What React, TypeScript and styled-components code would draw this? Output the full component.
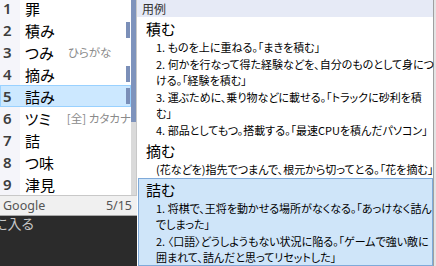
import styled, { createGlobalStyle } from 'styled-components'

const GlobalStyle = createGlobalStyle`
  html, body {
    margin: 0;
    padding: 0;
  }
  body {
    background: #2b2b2b;
    overflow: hidden;
    font-family: "Noto Sans CJK JP", "Noto Sans", sans-serif;
    font-feature-settings: "palt";
  }
`

interface ICandidate {
    n: number
    word: string
    note?: string
    mark?: boolean
    selected?: boolean
}

interface IEntry {
    head: string
    selected?: boolean
    senses: string[][]
}

const candidates: ICandidate[] = [
    { n: 1, word: '罪' },
    { n: 2, word: '積み', mark: true },
    { n: 3, word: 'つみ', note: 'ひらがな' },
    { n: 4, word: '摘み', mark: true },
    { n: 5, word: '詰み', mark: true, selected: true },
    { n: 6, word: 'ツミ', note: '[全] カタカナ' },
    { n: 7, word: '詰' },
    { n: 8, word: 'つ味' },
    { n: 9, word: '津見' },
]

const entries: IEntry[] = [
    {
        head: '積む',
        senses: [
            ['1. ものを上に重ねる。「まきを積む」'],
            ['2. 何かを行なって得た経験などを、自分のものとして身につ', 'ける。「経験を積む」'],
            ['3. 運ぶために、乗り物などに載せる。「トラックに砂利を積', 'む」'],
            ['4. 部品としてもつ。搭載する。「最速CPUを積んだパソコン」'],
        ],
    },
    {
        head: '摘む',
        senses: [['(花などを)指先でつまんで、根元から切ってとる。「花を摘む」']],
    },
    {
        head: '詰む',
        selected: true,
        senses: [
            ['1. 将棋で、王将を動かせる場所がなくなる。「あっけなく詰ん', 'でしまった」'],
            ['2. 〈口語〉どうしようもない状況に陥る。「ゲームで強い敵に', '囲まれて、詰んだと思ってリセットした」'],
        ],
    },
]

const Screen = styled.div`
    display: flex;
    width: 436px;
    height: 266px;
    overflow: hidden;
`

const LeftColumn = styled.div`
    width: 137px;
    flex-shrink: 0;
    display: flex;
    flex-direction: column;
`

const CandidateWindow = styled.div`
    margin-top: -3px;
    display: flex;
    flex-direction: column;
    background: #ffffff;
`

const ListArea = styled.div`
    display: flex;
`

const List = styled.div`
    width: 131px;
    display: flex;
    flex-direction: column;
`

const Row = styled.div<{ $selected?: boolean }>`
    height: 22px;
    display: flex;
    align-items: center;
    background: ${p => p.$selected ? '#cce8ff' : '#ffffff'};
    box-shadow: ${p => p.$selected ? 'inset 0 0 0 1px #99d1ff' : 'none'};
`

const Num = styled.div<{ $selected?: boolean }>`
    width: 20px;
    height: 100%;
    box-sizing: border-box;
    padding-left: 3px;
    display: flex;
    align-items: center;
    background: ${p => p.$selected ? 'transparent' : '#f5f5fa'};
    font-family: "Noto Sans", sans-serif;
    font-weight: 600;
    font-size: 15px;
    color: #3d3d3d;
`

const Word = styled.div`
    width: 43px;
    margin-left: 5px;
    font-size: 15px;
    color: #000000;
    white-space: nowrap;
`

const Note = styled.div`
    font-size: 11.5px;
    color: #8a8a8a;
    white-space: nowrap;
`

const Mark = styled.div`
    width: 4px;
    height: 16px;
    margin-left: auto;
    margin-right: 1px;
    background: #7b8fb8;
`

const Scrollbar = styled.div`
    width: 5px;
    border-right: 1px solid #c8c8c8;
    background: #dadada;
    display: flex;
    flex-direction: column;
`

const Thumb = styled.div`
    height: 125px;
    background: #7e93bc;
`

const Footer = styled.div`
    height: 19px;
    border-top: 1px solid #c8c8c8;
    border-bottom: 1px solid #a8a8a8;
    background: #f0f0f0;
    display: flex;
    align-items: center;
    justify-content: space-between;
    padding: 0 5px 0 3px;
    font-family: "Noto Sans", sans-serif;
    font-size: 12.5px;
    color: #555555;
`

const EditorText = styled.div`
    margin-left: -6px;
    line-height: 14px;
    font-size: 14px;
    color: #c6c6c6;
    white-space: nowrap;
`

const RightPanel = styled.div`
    width: 297px;
    flex-shrink: 0;
    box-sizing: border-box;
    border-right: 1px solid #a0a0a0;
    background: #ffffff;
    display: flex;
    flex-direction: column;
`

const Edge = styled.div`
    flex: 1;
    background: #e4e4e4;
`

const PanelHeader = styled.div`
    height: 17px;
    padding-left: 5px;
    display: flex;
    align-items: center;
    background: #e6eaf6;
    font-size: 12px;
    color: #333333;
`

const Entry = styled.div<{ $selected?: boolean }>`
    margin-left: 1px;
    padding: 1px 0 0 7px;
    border: 1px solid ${p => p.$selected ? '#7faad9' : 'transparent'};
    background: ${p => p.$selected ? '#cfe5f9' : 'transparent'};
`

const Head = styled.div`
    height: 20px;
    line-height: 20px;
    font-size: 15px;
    color: #000000;
`

const Sense = styled.div`
    padding-left: 10px;
    line-height: 16px;
    font-size: 11px;
    color: #000000;
    white-space: nowrap;

    & + & {
        margin-top: 1px;
    }
`

const Line = styled.div`
    height: 16px;
`

const App = () => {
    return (
        <>
            <GlobalStyle />
            <Screen>
                <LeftColumn>
                    <CandidateWindow>
                        <ListArea>
                            <List>
                                {candidates.map(c =>
                                    <Row key={c.n} $selected={c.selected}>
                                        <Num $selected={c.selected}>{c.n}</Num>
                                        <Word>{c.word}</Word>
                                        {c.note && <Note>{c.note}</Note>}
                                        {c.mark && <Mark />}
                                    </Row>
                                )}
                            </List>
                            <Scrollbar>
                                <Thumb />
                            </Scrollbar>
                        </ListArea>
                        <Footer>
                            <span>Google</span>
                            <span>5/15</span>
                        </Footer>
                    </CandidateWindow>
                    <EditorText>に入る</EditorText>
                </LeftColumn>
                <RightPanel>
                    <PanelHeader>用例</PanelHeader>
                    {entries.map(e =>
                        <Entry key={e.head} $selected={e.selected}>
                            <Head>{e.head}</Head>
                            {e.senses.map((s, i) =>
                                <Sense key={i}>
                                    {s.map((line, j) => <Line key={j}>{line}</Line>)}
                                </Sense>
                            )}
                        </Entry>
                    )}
                </RightPanel>
                <Edge />
            </Screen>
        </>
    );
};

export default App;
